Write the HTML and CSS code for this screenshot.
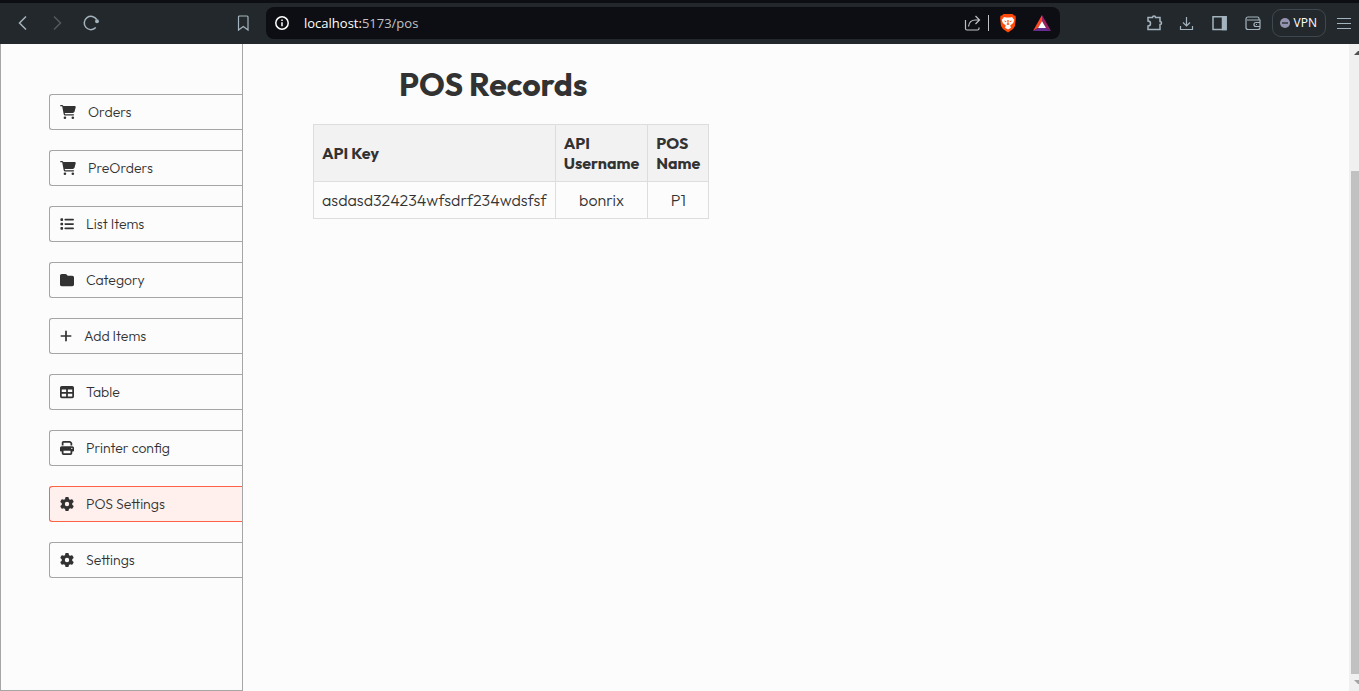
FILE: index.html
```html
<!DOCTYPE html>
<html lang="en">
<head>
<meta charset="utf-8">
<title>POS Records</title>
<link rel="stylesheet" href="styles.css">
</head>
<body>
<svg class="sprite" aria-hidden="true">
  <symbol id="cart" viewBox="0 0 576 512"><path d="M0 24C0 10.700 10.700 0 24 0H69.500c22 0 41.500 12.800 50.600 32h411c26.300 0 45.500 25 38.600 50.400l-41 152.300c-8.500 31.400-37 53.300-69.500 53.300H170.700l5.400 28.500c2.200 11.300 12.100 19.500 23.600 19.500H488c13.300 0 24 10.700 24 24s-10.700 24-24 24H199.700c-34.600 0-64.300-24.600-70.700-58.500L77.400 54.500c-.7-3.800-4-6.500-7.900-6.500H24C10.700 48 0 37.300 0 24zM128 464a48 48 0 1 1 96 0 48 48 0 1 1-96 0zm336-48a48 48 0 1 1 0 96 48 48 0 1 1 0-96z"/></symbol>
  <symbol id="list" viewBox="0 0 512 512"><path d="M40 48C26.700 48 16 58.700 16 72v48c0 13.300 10.700 24 24 24H88c13.300 0 24-10.700 24-24V72c0-13.300-10.700-24-24-24H40zM192 64c-17.700 0-32 14.300-32 32s14.300 32 32 32H480c17.700 0 32-14.300 32-32s-14.300-32-32-32H192zm0 160c-17.700 0-32 14.300-32 32s14.300 32 32 32H480c17.700 0 32-14.300 32-32s-14.300-32-32-32H192zm0 160c-17.700 0-32 14.300-32 32s14.300 32 32 32H480c17.700 0 32-14.300 32-32s-14.300-32-32-32H192zM16 232v48c0 13.300 10.700 24 24 24H88c13.300 0 24-10.700 24-24V232c0-13.300-10.700-24-24-24H40c-13.300 0-24 10.700-24 24zM40 368c-13.300 0-24 10.700-24 24v48c0 13.300 10.700 24 24 24H88c13.300 0 24-10.700 24-24V392c0-13.300-10.700-24-24-24H40z"/></symbol>
  <symbol id="folder" viewBox="0 0 512 512"><path d="M64 480H448c35.300 0 64-28.700 64-64V160c0-35.300-28.700-64-64-64H288c-10.100 0-19.600-4.700-25.600-12.800L243.200 57.600C231.100 41.500 212.100 32 192 32H64C28.700 32 0 60.700 0 96V416c0 35.300 28.700 64 64 64z"/></symbol>
  <symbol id="plus" viewBox="0 0 448 512"><path d="M256 80c0-17.700-14.300-32-32-32s-32 14.300-32 32V224H48c-17.700 0-32 14.300-32 32s14.300 32 32 32H192V432c0 17.700 14.300 32 32 32s32-14.300 32-32V288H400c17.700 0 32-14.300 32-32s-14.300-32-32-32H256V80z"/></symbol>
  <symbol id="table" viewBox="0 0 512 512"><path fill-rule="evenodd" d="M64 32h384a64 64 0 0 1 64 64v320a64 64 0 0 1-64 64H64a64 64 0 0 1-64-64V96a64 64 0 0 1 64-64zM64 160v96h160v-96zM288 160v96h160v-96zM64 320v96h160v-96zM288 320v96h160v-96z"/></symbol>
  <symbol id="printer" viewBox="0 0 512 512"><path fill-rule="evenodd" d="M128 0C92.700 0 64 28.700 64 64v96h64V64H354.700L384 93.300V160h64V93.300c0-17-6.700-33.300-18.700-45.300L400 18.700C388 6.700 371.700 0 354.700 0H128zM384 352v32 64H128V384 368 352H384zm64 32h32c17.700 0 32-14.300 32-32V256c0-35.300-28.700-64-64-64H64c-35.300 0-64 28.700-64 64v96c0 17.700 14.300 32 32 32H64v64c0 35.300 28.700 64 64 64H384c35.300 0 64-28.700 64-64V384zM432 248a24 24 0 1 1 0 48 24 24 0 1 1 0-48z"/></symbol>
  <symbol id="gear" viewBox="0 0 512 512"><path d="M495.900 166.600c3.200 8.700.5 18.400-6.400 24.600l-43.300 39.400c1.100 8.300 1.700 16.800 1.700 25.400s-.6 17.100-1.700 25.400l43.300 39.400c6.900 6.200 9.600 15.900 6.400 24.600-4.400 11.900-9.700 23.300-15.800 34.300l-4.700 8.100c-6.600 11-14 21.400-22.100 31.200-5.900 7.200-15.700 9.600-24.500 6.800l-55.700-17.700c-13.400 10.300-28.200 18.900-44 25.400l-12.500 57.100c-2 9.100-9 16.300-18.200 17.800-13.800 2.300-28 3.500-42.500 3.500s-28.700-1.200-42.500-3.500c-9.200-1.500-16.200-8.700-18.200-17.800l-12.500-57.100c-15.800-6.500-30.600-15.100-44-25.400L83.100 425.900c-8.800 2.800-18.600.3-24.500-6.800-8.100-9.800-15.500-20.200-22.100-31.200l-4.700-8.100c-6.100-11-11.400-22.400-15.800-34.300-3.200-8.700-.5-18.400 6.400-24.600l43.300-39.400C64.600 273.100 64 264.600 64 256s.6-17.100 1.700-25.400L22.400 191.200c-6.900-6.200-9.600-15.900-6.400-24.600 4.400-11.900 9.700-23.300 15.800-34.300l4.700-8.100c6.600-11 14-21.400 22.100-31.200 5.900-7.200 15.700-9.600 24.500-6.800l55.700 17.700c13.400-10.300 28.200-18.900 44-25.400l12.500-57.100c2-9.100 9-16.300 18.200-17.800C227.300 1.200 241.500 0 256 0s28.700 1.200 42.500 3.500c9.200 1.500 16.200 8.700 18.200 17.800l12.500 57.100c15.800 6.500 30.600 15.100 44 25.400l55.700-17.700c8.800-2.800 18.600-.3 24.500 6.800 8.100 9.800 15.500 20.200 22.100 31.200l4.700 8.100c6.100 11 11.400 22.400 15.800 34.300zM256 336a80 80 0 1 0 0-160 80 80 0 1 0 0 160z"/></symbol>
</svg>
<header class="browser">
  <div class="nav-tools">
    <button class="tool" aria-label="Back"><svg width="18" height="18" viewBox="0 0 18 18"><path d="M12 2.500 5.500 9l6.500 6.500"/></svg></button>
    <button class="tool dim" aria-label="Forward"><svg width="18" height="18" viewBox="0 0 18 18"><path d="m6 2.500 6.500 6.500L6 15.500"/></svg></button>
    <button class="tool" aria-label="Reload"><svg width="18" height="18" viewBox="0 0 18 18"><path d="M13.800 13.600A6.700 6.700 0 1 1 14.700 5.500"/><circle class="solid" cx="15" cy="7.300" r="1.200"/></svg></button>
    <button class="tool thin bookmark" aria-label="Bookmark"><svg width="18" height="18" viewBox="0 0 18 18"><path d="M4.500 3a1 1 0 0 1 1-1h7.500a1 1 0 0 1 1 1v13l-4.700-3.500L4.500 16z"/></svg></button>
  </div>
  <div class="address">
    <svg class="info" width="16" height="16" viewBox="0 0 16 16"><circle cx="8" cy="8" r="6.200"/><path d="M8 7.300v4M8 4.500v1.500"/></svg>
    <p class="url"><span class="host">localhost:</span>5173/pos</p>
    <button class="tool thin share" aria-label="Share"><svg width="18" height="18" viewBox="0 0 18 18"><path d="M2.500 6v8.500a1.500 1.500 0 0 0 1.500 1.500h10.500a1.500 1.500 0 0 0 1.500-1.500v-1M5.500 12.500c.5-4 3-6.500 7-6.500h3.500M12.500 2l4 4-4 4"/></svg></button>
    <span class="divider"></span>
    <button class="tool" aria-label="Shields"><svg width="18" height="20" viewBox="0 0 18 20"><path fill="#ff4a0a" stroke="none" d="M4.500 1h9l1.500 1.500 1.500.3.300 2.700-.8 7.500L14 16l-5 3.500L4 16l-2-3-.8-7.500.3-2.700 1.500-.3z"/><path fill="#fff" stroke="none" d="m5 4 2 .5h4l2-.5 2.200 3-1 3-3 2.500.8 2.200L9 16.500l-3-1.800.8-2.200-3-2.500-1-3z"/><path fill="#ff4a0a" stroke="none" d="m4.500 7.500 3 .7-.5 1zM13.500 7.500l-3 .7.5 1zM8.300 7h1.400l-.3 3 1.100 1.200L9 12l-1.500-.8L8.600 10z"/></svg></button>
    <button class="tool" aria-label="Rewards"><svg width="18" height="18" viewBox="0 0 18 18"><path fill="#ff4724" stroke="none" d="M9 1v6l-4 7-5 3z"/><path fill="#9e1f63" stroke="none" d="m9 1 9 16-5-3-4-7z"/><path fill="#662d91" stroke="none" d="m5 14h8l5 3H0z"/><path fill="#fff" stroke="none" d="m9 7 4 7H5z"/></svg></button>
  </div>
  <div class="extensions">
    <button class="tool" aria-label="Extensions"><svg width="18" height="18" viewBox="0 0 18 18"><path d="M3 3.500h4.500a1.500 1.500 0 0 1 3 0H15v4a1.500 1.500 0 0 1 0 3v5H3v-3.500a2.500 2.500 0 0 0 0-5z"/></svg></button>
    <button class="tool thin" aria-label="Downloads"><svg width="18" height="18" viewBox="0 0 18 18"><path d="M8.500 3v9M5 8.500 8.500 12 12 8.500M2.500 12v3.500h12V12"/></svg></button>
    <button class="tool" aria-label="Sidebar"><svg width="18" height="18" viewBox="0 0 18 18"><path d="M2 2.800h13v12.700H2z"/><path class="solid" d="M11.500 2.800h3.500v12.700h-3.500z"/></svg></button>
    <button class="tool thin" aria-label="Wallet"><svg width="18" height="18" viewBox="0 0 18 18"><path d="M15 6V4.500a1.500 1.500 0 0 0-1.500-1.500H4a2 2 0 0 0-2 2v8.500a2 2 0 0 0 2 2h10a2 2 0 0 0 2-2V6H3M16 8.500h-4a2 2 0 0 0 0 4H16M12 10.500h1"/></svg></button>
    <button class="vpn"><svg width="10" height="10" viewBox="0 0 10 10"><circle cx="5" cy="5" r="5" fill="#9494b0"/><path d="M2 5h6" stroke="#23282c" stroke-width="1.300"/></svg>VPN</button>
    <button class="tool thin" aria-label="Menu"><svg width="18" height="18" viewBox="0 0 18 18"><path d="M2 4.500h14M2 9.500h14M2 14.500h14"/></svg></button>
  </div>
</header>
<div class="page">
  <nav class="sidebar">
    <a class="item" href="#"><svg class="wide"><use href="#cart"/></svg>Orders</a>
    <a class="item" href="#"><svg class="wide"><use href="#cart"/></svg>PreOrders</a>
    <a class="item" href="#"><svg><use href="#list"/></svg>List Items</a>
    <a class="item" href="#"><svg><use href="#folder"/></svg>Category</a>
    <a class="item" href="#"><svg class="narrow"><use href="#plus"/></svg>Add Items</a>
    <a class="item" href="#"><svg><use href="#table"/></svg>Table</a>
    <a class="item" href="#"><svg><use href="#printer"/></svg>Printer config</a>
    <a class="item active" href="#"><svg><use href="#gear"/></svg>POS Settings</a>
    <a class="item" href="#"><svg><use href="#gear"/></svg>Settings</a>
  </nav>
  <main class="content">
    <section class="records">
      <h1>POS Records</h1>
      <table>
        <thead><tr><th>API Key</th><th>API<br>Username</th><th>POS<br>Name</th></tr></thead>
        <tbody><tr><td>asdasd324234wfsdrf234wdsfsf</td><td>bonrix</td><td>P1</td></tr></tbody>
      </table>
    </section>
  </main>
  <div class="scrollbar" aria-hidden="true">
    <span class="arrow up"></span>
    <span class="thumb"></span>
    <span class="arrow down"></span>
  </div>
</div>
</body>
</html>
```
FILE: styles.css
```css
* { box-sizing: border-box; }

body {
  margin: 0;
  height: 100vh;
  display: flex;
  flex-direction: column;
  overflow: hidden;
  background: #fcfcfc;
  color: #323232;
  font-family: Outfit, Lato, sans-serif;
}

button { font: inherit; cursor: pointer; }

.sprite { display: none; }

.browser {
  flex: none;
  display: flex;
  align-items: center;
  height: 44px;
  padding: 0 6px 1px 14px;
  border-top: 3px solid #0d0e13;
  background: #23282c;
}

.nav-tools {
  display: flex;
  gap: 16px;
  width: 252px;
  padding-right: 14px;
}

.tool {
  display: flex;
  padding: 0;
  border: 0;
  background: none;
  color: #a4b4be;
}

.tool svg, .info {
  fill: none;
  stroke: currentColor;
  stroke-width: 1.500;
}

.tool.thin svg { stroke-width: 1.200; }
.tool .solid { fill: currentColor; }
.tool.dim { color: #515960; }
.bookmark { margin-left: auto; }

.address {
  flex: 0 1 794px;
  display: flex;
  align-items: center;
  height: 32px;
  padding: 0 9px 0 8px;
  border-radius: 8px;
  background: #0d0e13;
  color: #fff;
}

.url {
  margin: 0 auto 0 14px;
  color: #c0c1c5;
  font: 13px/20px "Open Sans", sans-serif;
}

.host { color: #fff; }
.share { color: #c0c1c5; }

.divider {
  width: 1px;
  height: 16px;
  margin: 0 10px 0 7px;
  background: #c0c1c5;
}

.address .tool:last-child { margin-left: 16px; }

.extensions {
  display: flex;
  align-items: center;
  gap: 15px;
  margin-left: auto;
}

.vpn {
  display: flex;
  align-items: center;
  gap: 4px;
  height: 28px;
  margin: 0 -6px 0 -5px;
  padding: 0 8px 0 7px;
  border: 1px solid #3f484f;
  border-radius: 9px;
  background: none;
  color: #fff;
  font: 12px/16px "Open Sans", sans-serif;
}

.page {
  flex: 1;
  display: flex;
  min-height: 0;
}

.sidebar {
  flex: none;
  display: flex;
  flex-direction: column;
  gap: 20px;
  width: 243px;
  padding: 50px 0 0 48px;
  border: 1px solid #a6a6a6;
  border-top: 0;
}

.item {
  display: flex;
  align-items: center;
  gap: 12px;
  height: 36px;
  padding-left: 10px;
  border: 1px solid #a6a6a6;
  border-right: 0;
  border-radius: 3px 0 0 3px;
  color: #323232;
  font-size: 14px;
  font-weight: 300;
  line-height: 18px;
  text-decoration: none;
}

.item svg {
  width: 14px;
  height: 14px;
  fill: #323232;
}

.item .wide { width: 16px; }
.item .narrow { width: 12px; }

.item.active {
  border-color: tomato;
  background: #fff0ed;
}

.content {
  flex: 1;
  padding: 20px 70px;
}

.records {
  display: flex;
  flex-direction: column;
  align-items: flex-start;
  width: max-content;
}

h1 {
  margin: 0 0 20px;
  padding-left: 86px;
  font-size: 32px;
  font-weight: 700;
  line-height: 40px;
}

table {
  border-collapse: collapse;
  font-size: 16px;
  line-height: 20px;
}

th, td {
  padding: 8px;
  border: 1px solid #ddd;
  text-align: center;
}

td { font-weight: 300; }

th {
  background: #f2f2f2;
  font-weight: 700;
  text-align: left;
}

.scrollbar {
  flex: none;
  display: flex;
  flex-direction: column;
  align-items: flex-end;
  width: 10px;
  padding: 7px 0;
  overflow: hidden;
  background: #f0f0f0;
}

.thumb {
  flex: 1;
  width: 8px;
  margin: 116px 0 6px;
  background: #c1c1c1;
}

.arrow {
  width: 5px;
  height: 4px;
  background: #505050;
}

.up { clip-path: polygon(0 100%, 80% 0, 100% 0, 100% 100%); }
.down { background: #a3a3a3; clip-path: polygon(0 0, 100% 0, 100% 100%, 80% 100%); }
```
